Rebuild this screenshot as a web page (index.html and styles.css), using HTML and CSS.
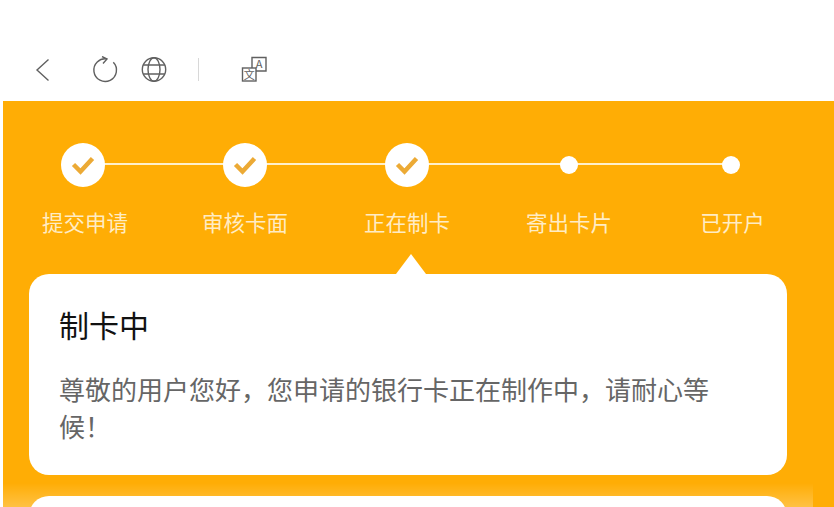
FILE: index.html

```html
<!DOCTYPE html>
<html lang="zh-CN">
<head>
    <meta charset="UTF-8">
    <meta name="viewport" content="width=device-width, initial-scale=1.0">
    <title>制卡中</title>
    <link rel="stylesheet" href="styles.css">
</head>
<body>
    <div class="toolbar">
        <svg class="icon back" viewBox="0 0 28 28"><path d="M19.5 3.5 L8 14 L19.5 24.5"/></svg>
        <svg class="icon reload" viewBox="0 0 28 28"><path d="M16 3 A11.3 11.3 0 1 0 22.3 6.3"/><path d="M11 0.5 L16 3 L12 7.5"/></svg>
        <svg class="icon globe" viewBox="0 0 28 28">
            <circle cx="14" cy="13.5" r="11.7"/>
            <ellipse cx="14" cy="13.5" rx="6" ry="11.7"/>
            <path d="M3.2 9 H24.8 M3.2 18 H24.8"/>
        </svg>
        <span class="divider"></span>
        <svg class="icon translate" viewBox="0 0 28 28">
            <path d="M12 12 V1.5 H26 V15 H16"/>
            <rect x="2.5" y="12" width="13.5" height="13"/>
            <text x="19" y="12">A</text>
            <text x="9.2" y="22.5">文</text>
        </svg>
    </div>

    <div class="page">
        <div class="content">
            <ul class="steps">
                <li class="step done">
                    <span class="mark"><svg viewBox="0 0 44 44"><path d="M12.5 21.5 L19.5 28.5 L31.5 15.5"/></svg></span>
                    <p>提交申请</p>
                </li>
                <li class="step done">
                    <span class="mark"><svg viewBox="0 0 44 44"><path d="M12.5 21.5 L19.5 28.5 L31.5 15.5"/></svg></span>
                    <p>审核卡面</p>
                </li>
                <li class="step done current">
                    <span class="mark"><svg viewBox="0 0 44 44"><path d="M12.5 21.5 L19.5 28.5 L31.5 15.5"/></svg></span>
                    <p>正在制卡</p>
                </li>
                <li class="step">
                    <span class="mark"></span>
                    <p>寄出卡片</p>
                </li>
                <li class="step">
                    <span class="mark"></span>
                    <p>已开户</p>
                </li>
            </ul>

            <div class="card">
                <h2>制卡中</h2>
                <p>尊敬的用户您好&#xFF0C;您申请的银行卡正在制作中&#xFF0C;请耐心等候&#xFF01;</p>
            </div>
            <div class="card next"></div>
            <div class="fade"></div>
        </div>
    </div>
</body>
</html>
```

FILE: styles.css

```css
* {
    margin: 0;
    padding: 0;
    box-sizing: border-box;
}

body {
    width: 834px;
    height: 507px;
    background: #fff;
    font-family: "Noto Sans CJK SC", "Noto Sans", sans-serif;
    overflow: hidden;
}

.toolbar {
    height: 101px;
    padding: 38px 0 0 29px;
    display: flex;
    align-items: center;
}

.icon {
    width: 28px;
    height: 28px;
    fill: none;
    stroke: #606060;
    stroke-width: 1.4;
}

.reload { margin-left: 34px; }
.globe { margin-left: 21px; }

.divider {
    width: 1px;
    height: 23px;
    background: #d8d8d8;
    margin-left: 30px;
}

.translate { margin-left: 41px; }

.translate text {
    fill: #606060;
    stroke: none;
    font-size: 11px;
    text-anchor: middle;
}

.page {
    margin-left: 3px;
    height: 406px;
    background: #ffad05;
    overflow: hidden;
}

.content {
    position: relative;
    width: 810px;
    height: 406px;
    padding: 0 26px;
}

.steps {
    list-style: none;
    display: grid;
    grid-template-columns: repeat(5, 162px);
    margin: 0 -26px;
    padding-top: 41px;
}

.step {
    position: relative;
    display: flex;
    flex-direction: column;
    align-items: center;
    transform: translateX(-1px);
}

/* line to the next step */
.step::after {
    content: "";
    position: absolute;
    top: 21px;
    left: 50%;
    width: 162px;
    height: 2px;
    background: #fff0cc;
}

.step:last-child::after {
    display: none;
}

.mark {
    position: relative;
    z-index: 1;
    width: 18px;
    height: 18px;
    margin: 14px 0;
    border-radius: 50%;
    background: #fff;
}

.done .mark {
    width: 44px;
    height: 44px;
    margin: 1px 0;
}

.mark svg {
    display: block;
    width: 44px;
    height: 44px;
    fill: none;
    stroke: #ecaa35;
    stroke-width: 4.5;
}

.step p {
    margin-top: 16px;
    font-size: 21.5px;
    line-height: 36px;
    color: #ffecc4;
    white-space: nowrap;
}

.step:first-child p { margin-left: 4px; }
.step:last-child p { margin-left: 3px; }

.card {
    position: relative;
    margin-top: 34px;
    padding: 30px 30px 0;
    height: 201px;
    background: #fff;
    border-radius: 20px;
}

/* pointer up to the current step */
.card:not(.next)::before {
    content: "";
    position: absolute;
    top: -20px;
    left: 367px;
    border-left: 15px solid transparent;
    border-right: 15px solid transparent;
    border-bottom: 20px solid #fff;
}

.card h2 {
    font-size: 30px;
    font-weight: 400;
    line-height: 40px;
    color: #111;
}

.card p {
    margin-top: 26px;
    font-size: 26px;
    line-height: 37px;
    color: #666;
}

.card.next {
    margin-top: 21px;
}

.fade {
    position: absolute;
    left: 0;
    right: 0;
    bottom: 0;
    height: 24px;
    background: linear-gradient(rgba(255, 255, 255, 0), rgba(255, 255, 255, 0.25));
}
```
